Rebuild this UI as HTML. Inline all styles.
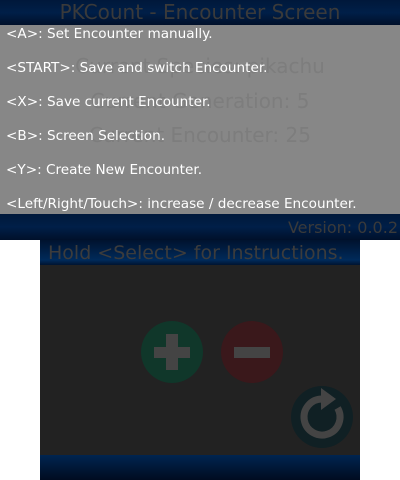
<!DOCTYPE html><html><head><style>
body{margin:0;width:400px;height:480px;background:#fff;position:relative;overflow:hidden;font-family:"DejaVu Sans","Liberation Sans",sans-serif}
.a{position:absolute}
.bar{background:linear-gradient(#00183a,#001f48 50%,#00102a)}
</style></head><body>
<div class="a" style="left:0;top:0;width:400px;height:240px;background:#1e1e1e"></div>
<div class="a bar" style="left:0;top:0;width:400px;height:25px"></div>
<div class="a" style="left:0;top:0;width:400px;text-align:center;font-size:20px;line-height:25px;color:#3a3a3a">PKCount - Encounter Screen</div>
<div class="a bar" style="left:0;top:214px;width:400px;height:26px"></div>
<div class="a" style="right:2px;top:218px;font-size:16px;color:#3a3a3a">Version: 0.0.2</div>
<div class="a" style="left:0;top:25px;width:400px;height:189px;background:#878787"></div>
<div class="a" style="left:0;top:49px;width:400px;text-align:center;font-size:20px;color:#7d7d7d;line-height:34.5px">Current Species: pikachu<br>Current Generation: 5<br>Current Encounter: 25</div>
<div class="a" style="left:6px;top:17px;font-size:13.6px;color:#fff;line-height:34px;white-space:nowrap">
&lt;A&gt;: Set Encounter manually.<br>&lt;START&gt;: Save and switch Encounter.<br>&lt;X&gt;: Save current Encounter.<br>&lt;B&gt;: Screen Selection.<br>&lt;Y&gt;: Create New Encounter.<br>&lt;Left/Right/Touch&gt;: increase / decrease Encounter.</div>
<div class="a" style="left:40px;top:240px;width:320px;height:240px;background:#222"></div>
<div class="a bar" style="left:40px;top:240px;width:320px;height:25px;background:linear-gradient(#00122e,#002a5a 80%,#001430)"></div>
<div class="a" style="left:48px;top:240px;font-size:19px;line-height:26px;color:#3c3c3c;white-space:nowrap">Hold &lt;Select&gt; for Instructions.</div>
<div class="a bar" style="left:40px;top:455px;width:320px;height:25px;background:linear-gradient(#002550,#001838 50%,#000c20)"></div>
<svg class="a" style="left:40px;top:240px" width="320" height="240">
<circle cx="132" cy="112" r="31" fill="#10372a"/>
<rect x="114" y="107" width="36" height="11" fill="#444"/><rect x="126" y="94" width="12" height="36" fill="#444"/>
<circle cx="212" cy="112" r="31" fill="#3a181b"/>
<rect x="194" y="107" width="36" height="11" fill="#444"/>
<circle cx="282" cy="177" r="31" fill="#102024"/>
<path d="M297.6 168 A18 18 0 1 1 282 159" fill="none" stroke="#444" stroke-width="7"/>
<path d="M281 148 L296 159 L281 170 Z" fill="#444"/>
</svg>
</body></html>
